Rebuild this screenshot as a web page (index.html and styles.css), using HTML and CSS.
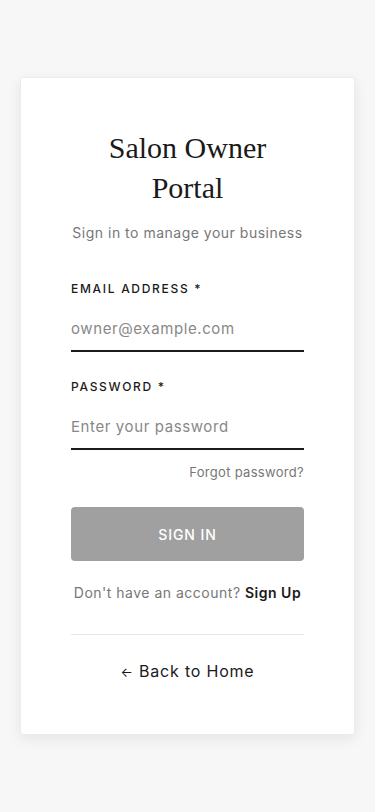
FILE: index.html
```html
<!DOCTYPE html>
<html lang="en">
<head>
    <meta charset="utf-8">
    <meta name="viewport" content="width=device-width, initial-scale=1.0">
    <title>Salon Owner Portal | Sign in</title>
    <link rel="stylesheet" href="styles.css">
</head>
<body>

    <div class="page">
        <div class="card">
            <h1 class="title">Salon Owner Portal</h1>
            <p class="subtitle">Sign in to manage your business</p>

            <form class="form">
                <label class="field">
                    <span class="label">Email Address *</span>
                    <input type="email" placeholder="owner@example.com">
                </label>

                <label class="field">
                    <span class="label">Password *</span>
                    <input type="password" placeholder="Enter your password">
                </label>

                <div class="forgot"><a href="#">Forgot password?</a></div>

                <button type="button" class="btn">Sign In</button>
            </form>

            <p class="signup">Don't have an account? <a href="#">Sign Up</a></p>

            <div class="divider"></div>

            <a class="back" href="#"><span class="arrow">&larr;</span> Back to Home</a>
        </div>
    </div>

</body>
</html>
```

FILE: styles.css
```css
html {
    height: 100%;
}

body {
    margin: 0;
    min-height: 100%;
    background-color: #f7f7f7;
    font-family: "Inter", "DejaVu Sans", sans-serif;
    color: #1a1a1a;
}

.page {
    padding: 77px 20px 40px 20px;
}

.card {
    background-color: #fff;
    border: solid 1px #ececec;
    border-radius: 3px;
    box-shadow: 0 4px 14px rgba(0, 0, 0, 0.08);
    padding: 50px 50px 51px;
    text-align: center;
}

.title {
    margin: 0 auto;
    max-width: 200px;
    font-family: "Liberation Serif", serif;
    font-weight: 400;
    font-size: 30px;
    line-height: 40px;
    color: #1a1a1a;
}

.subtitle {
    margin: 15px 0 0;
    font-size: 14px;
    line-height: 20px;
    color: #777;
    letter-spacing: 0.5px;
}

.form {
    margin-top: 38px;
    text-align: left;
}

.field {
    display: block;
    margin-bottom: 27px;
}

.label {
    display: block;
    font-size: 12px;
    line-height: 16px;
    font-weight: 500;
    letter-spacing: 1.7px;
    text-transform: uppercase;
    color: #1a1a1a;
}

.field input {
    display: block;
    box-sizing: border-box;
    width: 100%;
    height: 47px;
    margin-top: 8px;
    padding: 2px 0 0;
    border: none;
    border-bottom: solid 2px #1a1a1a;
    background: transparent;
    font-family: inherit;
    font-size: 15px;
    letter-spacing: 0.6px;
    color: #1a1a1a;
    outline: none;
}
.field input::placeholder {
    color: #888;
}

.forgot {
    margin-top: -15px;
    text-align: right;
    font-size: 13px;
    line-height: 20px;
    letter-spacing: 0.3px;
}
.forgot a {
    color: #777;
    text-decoration: none;
}

.btn {
    display: block;
    width: 100%;
    height: 54px;
    margin-top: 25px;
    border: none;
    border-radius: 4px;
    background-color: #a0a0a0;
    color: #fff;
    font-family: inherit;
    font-size: 14px;
    font-weight: 500;
    letter-spacing: 0.9px;
    text-transform: uppercase;
}

.signup {
    margin: 22px 0 0;
    font-size: 14px;
    line-height: 20px;
    letter-spacing: 0.5px;
    color: #777;
}
.signup a {
    color: #1a1a1a;
    font-weight: 600;
    text-decoration: none;
}

.divider {
    height: 1px;
    margin-top: 31px;
    background-color: #e6e6e6;
}

.back {
    display: inline-block;
    margin-top: 25px;
    font-size: 16px;
    line-height: 22px;
    letter-spacing: 0.8px;
    color: #1a1a1a;
    text-decoration: none;
}
.back .arrow {
    font-size: 13px;
}
```
